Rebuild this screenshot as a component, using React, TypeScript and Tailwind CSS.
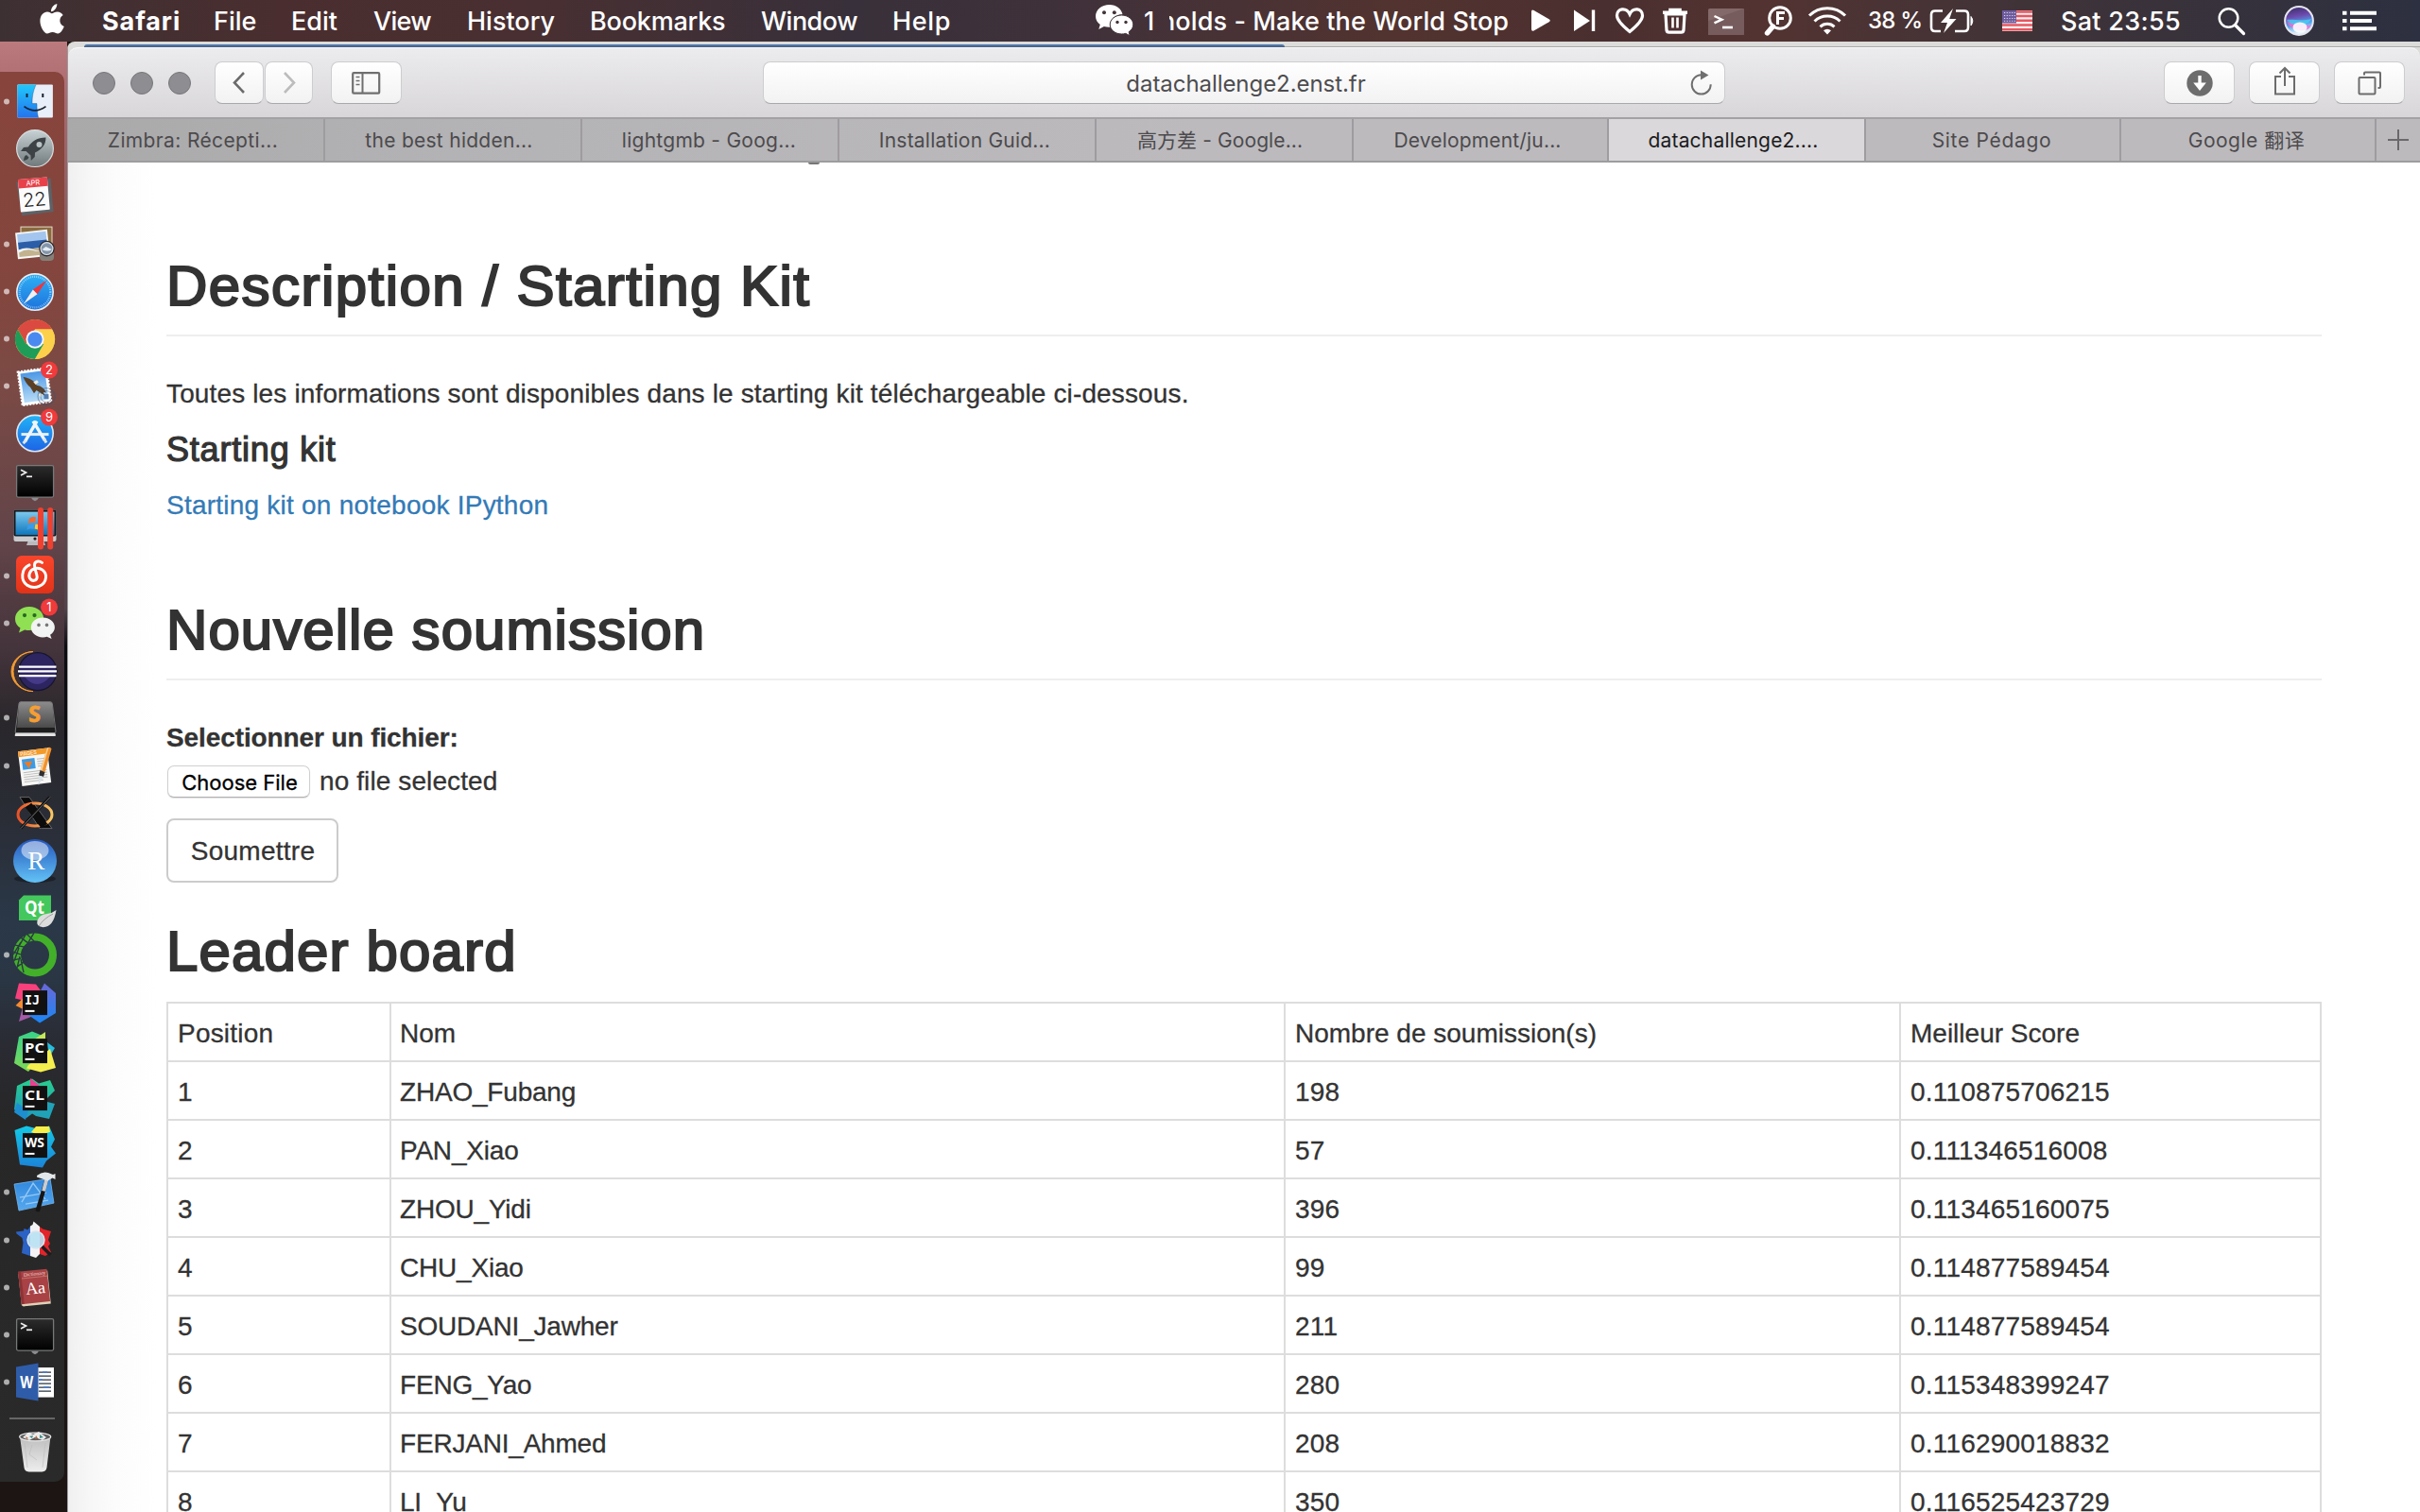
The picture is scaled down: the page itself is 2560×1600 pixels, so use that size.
import React from 'react';

const menus = [
  { label: 'Safari', cls: 'w-[118px] font-bold tracking-[0.9px]' },
  { label: 'File', cls: 'w-[82px]' },
  { label: 'Edit', cls: 'w-[87px]' },
  { label: 'View', cls: 'w-[99px] tracking-[-0.7px]' },
  { label: 'History', cls: 'w-[130px]' },
  { label: 'Bookmarks', cls: 'w-[181px] tracking-[-0.2px]' },
  { label: 'Window', cls: 'w-[139px] tracking-[-0.5px]' },
  { label: 'Help', cls: 'w-[215px] tracking-[0.7px]' },
];

function StatusIcons() {
  return (
    <svg className="h-[44px] w-[350px] shrink-0" viewBox="1612 0 350 44" fill="none">
      <path d="M1620 12.500q0-3 2.600-1.600l16 9.300q2.400 1.500 0 3l-16 9.300q-2.600 1.200-2.600-1.700Z" fill="#fff" />
      <path d="M1665 10.500l17 11.500-17 11V10.500Z" fill="#fff" />
      <path d="M1685.500 10.500V33" stroke="#fff" strokeWidth="3.400" />
      <path d="M1724 33.500C1716 27 1710.500 21.500 1710.500 16.500c0-8 10-9 13.500-1.500 3.500-7.500 13.500-6.500 13.500 1.500 0 5-5.500 10.500-13.500 17Z" stroke="#fff" strokeWidth="3.200" />
      <path d="M1759 13.200h26M1767 12.500V10.500h10v2" stroke="#fff" strokeWidth="3.600" />
      <path d="M1762 15l1 17q.3 2.200 2.500 2.200h13q2.200 0 2.500-2.200l1-17Z" stroke="#fff" strokeWidth="3.200" />
      <path d="M1769.500 18.500v11M1774.500 18.500v11" stroke="#fff" strokeWidth="2.600" />
      <rect x="1807" y="9" width="38" height="28" rx="1.500" fill="#84696a" />
      <path d="M1807 37V22l38-13v26.500q0 1.500-1.500 1.500Z" fill="#775c5e" />
      <path d="M1813.500 17l8 3.700-8 3.700" stroke="#fff" strokeWidth="2.400" />
      <path d="M1822 29h11" stroke="#fff" strokeWidth="2.600" />
      <circle cx="1883" cy="19" r="11.300" stroke="#fff" strokeWidth="3" />
      <path d="M1875.500 28l-6 7" stroke="#fff" strokeWidth="5.400" strokeLinecap="round" />
      <path d="M1880.500 26V13.500h7.500M1880.500 19.500h6.500" stroke="#fff" strokeWidth="3" />
      <path d="M1914 16.500a27 27 0 0 1 38 0M1919.500 22.500a19.500 19.500 0 0 1 27 0M1925.500 28.300a11 11 0 0 1 15 0" stroke="#fff" strokeWidth="3" />
      <path d="M1929 32.200a6 6 0 0 1 8 0l-4 4.200Z" fill="#fff" />
    </svg>
  );
}

function MenuBar() {
  return (
    <div className="flex h-[44px] w-[2560px] shrink-0 items-center whitespace-nowrap bg-[linear-gradient(90deg,#3d3033_0px,#4a2e2f_300px,#492f31_550px,#38303a_900px,#40313a_1150px,#52332f_1480px,#4a2f30_1700px,#533331_1860px,#3f3338_2150px,#2d3040_2560px)] font-['Inter','Noto_Sans',sans-serif] text-[27px] font-medium leading-[46px] text-white">
      <svg className="ml-[42px] mr-[40px] h-[44px] w-[26px] shrink-0" viewBox="0 0 26 44">
        <path d="M18.300 4c.3 3.800-2.700 8-6.200 8.300C11.600 8.700 14.900 4.600 18.300 4ZM12.800 14.300c1.500 0 3.200-1.700 6-1.700 2.400.1 4.500 1.300 5.900 3.300-5 3-4.100 10 1.100 12.100-1.200 3.300-3.800 7.400-6.400 7.500-2.300.1-3.100-1.400-5.800-1.400s-3.600 1.400-5.800 1.400C5.100 35.600.4 29 .4 22.300c0-6.500 4-9.600 7.600-9.700 2.300 0 3.900 1.700 4.800 1.700Z" fill="#fff" />
      </svg>
      {menus.map((m) => (
        <span key={m.label} className={'shrink-0 pt-[2px] ' + m.cls}>{m.label}</span>
      ))}
      <svg className="h-[44px] w-[42px] shrink-0" viewBox="1159 0 42 44">
        <path d="M1173.500 5c-8 0-14.500 5.400-14.500 12.200 0 3.600 1.900 6.600 4.800 8.800l-1.500 5 5.600-3c1.800.5 3.700.8 5.600.8h1c-2-7 4-13.500 13-13.500C1186.500 9.500 1181 5 1173.500 5Z" fill="#fff" />
        <path d="M1186.500 16c-6.800 0-12.300 4.500-12.300 10s5.500 10 12.300 10c1.500 0 3-.2 4.300-.6l4.400 2.400-1.100-4c2.800-1.900 4.700-4.700 4.700-7.800 0-5.500-5.500-10-12.300-10Z" fill="#fff" stroke="#43343a" strokeWidth="1" />
        <circle cx="1168" cy="13.300" r="2" fill="#43343a" /><circle cx="1178.800" cy="13.300" r="2" fill="#43343a" />
        <circle cx="1182" cy="23.500" r="1.700" fill="#43343a" /><circle cx="1191" cy="23.500" r="1.700" fill="#43343a" />
      </svg>
      <span className="ml-[9px] w-[27px] shrink-0 pt-[2px]">1</span>
      <span className="flex w-[375px] shrink-0 justify-start overflow-hidden pt-[2px]">
        <span className="-ml-[10px] tracking-[0.1px]">nolds - Make the World Stop</span>
      </span>
      <StatusIcons />
      <span className="ml-[14px] w-[65px] shrink-0 text-[24px] tracking-[-0.8px]">38 %</span>
      <svg className="h-[44px] w-[109px] shrink-0" viewBox="2041 0 109 44" fill="none">
        <path d="M2055 11.500h-8q-4 0-4 4v13.500q0 4 4 4h6M2069 11.500h9q4 0 4 4v13.500q0 4-4 4h-10" stroke="#fff" strokeWidth="2.600" />
        <path d="M2085 17.500q3.600 4.500 0 9.500Z" fill="#fff" stroke="#fff" />
        <path d="M2066 9l-13 15h7l-4 11 13.500-15h-7.300Z" fill="#fff" />
        <rect x="2118" y="11" width="32" height="22" fill="#f4f0f2" />
        <path d="M2118 12.500h32M2118 17h32M2118 21.700h32M2118 26.400h32M2118 31.300h32" stroke="#e9555f" strokeWidth="2.500" />
        <rect x="2118" y="11" width="15" height="13.500" fill="#6d5b9d" />
        <path d="M2120 13.500h12M2120 16.500h12M2120 19.500h12M2120 22.300h12" stroke="#d9d4ea" strokeWidth="1" strokeDasharray="1.200 1.500" />
      </svg>
      <span className="ml-[30px] w-[163px] shrink-0 pt-[2px] tracking-[0.3px]">Sat 23:55</span>
      <svg className="h-[44px] w-[180px] shrink-0" viewBox="2343 0 180 44" fill="none">
        <defs>
          <linearGradient id="siri" x1="0" y1="0" x2="0.2" y2="1">
            <stop offset="0" stopColor="#33285c" /><stop offset="0.4" stopColor="#6d4aae" /><stop offset="0.7" stopColor="#4fa6ee" /><stop offset="1" stopColor="#e7f6ff" />
          </linearGradient>
        </defs>
        <circle cx="2357.500" cy="19" r="9.800" stroke="#fff" strokeWidth="2.500" />
        <path d="M2364.500 26.500l9 9" stroke="#fff" strokeWidth="3.200" strokeLinecap="round" />
        <circle cx="2432" cy="22" r="14.900" fill="url(#siri)" stroke="#e6e6ee" strokeWidth="2" />
        <path d="M2419 21c9-1 14 2 26-1-4 7-8 4-13 9-5-1-9-3-13-8Z" fill="#48d7f5" opacity=".7" />
        <path d="M2419 22c7 6 11 2 16 3s6 3 10 1c-2 6-8 7-13 6s-11-3-13-10Z" fill="#f06bd0" opacity=".8" />
        <ellipse cx="2433" cy="29" rx="7.500" ry="5.500" fill="#fff" opacity=".85" />
        <path d="M2478 13.700h4.500M2478 22h4.500M2478 30.300h4.500M2486 13.700h28M2486 22h23M2486 30.300h28" stroke="#fff" strokeWidth="4" />
      </svg>
    </div>
  );
}

type IconDef = { name: string; dot?: boolean; badge?: string; art: React.ReactNode };

function Badge({ n }: { n: string }) {
  return (
    <g>
      <circle cx="52" cy="8.500" r="9" fill="#f03a3c" />
      <text x="52" y="13.100" textAnchor="middle" fontSize="13" fontFamily="Inter" fill="#fff">{n}</text>
    </g>
  );
}

function JetTile({ t }: { t: string }) {
  return (
    <g>
      <rect x="24" y="12" width="26" height="26" fill="#111" />
      <text x="26" y="26.500" fontSize="14.500" fontWeight="700" fontFamily={t === 'IJ' ? 'DejaVu Sans Mono' : 'Open Sans'} textLength={t === 'IJ' ? 16 : 21} lengthAdjust="spacingAndGlyphs" fill="#fff">{t}</text>
      <path d="M26.500 33.800h10" stroke="#fff" strokeWidth="2" />
    </g>
  );
}

function TerminalArt() {
  return (
    <g transform="translate(0 .7)">
      <path d="M33 42q4 7 8 0Z" fill="#8d8d90" />
      <rect x="17.600" y="7.800" width="39" height="33.500" rx="1.500" fill="url(#term)" stroke="#77787a" strokeWidth="1.300" />
      <path d="M22 12.500l5.500 2.800-5.500 2.800" stroke="#eee" strokeWidth="1.700" fill="none" />
      <path d="M28 19.500h6" stroke="#eee" strokeWidth="1.700" />
    </g>
  );
}

const dock: IconDef[] = [
  { name: 'finder', dot: true, art: (
    <g>
      <rect x="18.300" y="7.500" width="37.600" height="35" rx="1" fill="#e8eff8" />
      <path d="M18.300 8.500q0-1 1-1H38c-3 7-4 12-4 20h5c0 6 .4 10 1.500 15H19.300q-1 0-1-1Z" fill="url(#finderBlue)" />
      <path d="M38 7.500c-3 7-4 12-4 20h5c0 6 .4 10 1.500 15" stroke="#174a8a" strokeOpacity=".4" fill="none" />
      <path d="M28.500 17v4M45.300 17v4" stroke="#17202c" strokeWidth="2" />
      <path d="M25.500 30.500q11.500 8.500 23 0" stroke="#17202c" strokeWidth="1.700" fill="none" />
    </g>) },
  { name: 'launchpad', art: (
    <g>
      <circle cx="37" cy="25" r="19.400" fill="url(#silver)" stroke="#d7dee0" strokeWidth="1.200" />
      <path d="M48.500 13.500c-9 0-15 4-18.500 10l-5 .5-3 4 5.500-.2 5 4.700.3 5.500 4-4 .2-4.500c7-3.500 11.500-8 11.500-16Z" fill="#3c4245" />
      <circle cx="41.500" cy="21" r="3" fill="#b9c2c4" />
      <path d="M28 32c-2 .3-2.700 3-3 6 3-.5 5-1.500 5.500-3.500Z" fill="#3c4245" />
    </g>) },
  { name: 'calendar', art: (
    <g transform="rotate(-5 37 25)">
      <path d="M18.500 9l3 36 33.500-1.500V8Z" fill="#5d6266" />
      <rect x="20.500" y="6.500" width="31" height="34.500" rx=".8" fill="#fbfbfb" />
      <rect x="20.500" y="6.500" width="31" height="9.500" fill="#e8414a" />
      <text x="36" y="13.800" textAnchor="middle" fontSize="7.500" fontFamily="Inter" fill="#fff">APR</text>
      <text x="36" y="36" textAnchor="middle" fontSize="20" fontFamily="Inter" fontWeight="300" fill="#222">22</text>
    </g>) },
  { name: 'preview', dot: true, art: (
    <g>
      <rect x="22" y="7" width="33" height="30" fill="#8a6b3e" stroke="#e8e0cc" />
      <g transform="rotate(-6 34 26)">
        <rect x="17.500" y="11.500" width="34" height="28" fill="#f7f7f7" />
        <rect x="19.300" y="13.300" width="30.500" height="10" fill="#a4c6ee" />
        <rect x="19.300" y="22" width="30.500" height="8" fill="#2c5ea8" />
        <path d="M19.300 30h30.500v7.500H19.300Z" fill="#c3b28e" />
        <path d="M19.300 30q8-3 15 1t15-1v2q-8 3-15 0t-15 1Z" fill="#eef4fa" />
      </g>
      <rect x="42" y="33" width="15" height="10" rx="4" fill="#857f79" />
      <circle cx="49.500" cy="30" r="7.600" fill="#8295ab" stroke="#2b2b2d" strokeWidth="1.400" />
      <circle cx="49.500" cy="30" r="6.400" fill="none" stroke="#dadde0" strokeWidth="1.200" />
      <path d="M44.500 31l4-3 6.500 3q-5 3-10.500 0Z" fill="#e7edf2" />
    </g>) },
  { name: 'safari', dot: true, art: (
    <g transform="translate(0 1)">
      <circle cx="37" cy="25" r="19.200" fill="url(#safariBlue)" stroke="#e9edf0" strokeWidth="1.600" />
      <circle cx="37" cy="25" r="16.300" fill="none" stroke="#c8ecff" strokeWidth="2.200" strokeDasharray=".7 1.400" opacity=".8" />
      <path d="M49.500 12.500L34.800 22.300l4.700 4.800Z" fill="#f0343a" />
      <path d="M25 37.500l9.800-15.200 4.700 4.800Z" fill="#f2efee" />
    </g>) },
  { name: 'chrome', dot: true, art: (
    <g transform="translate(0 1)">
      <circle cx="37" cy="25" r="21" fill="#f9cf48" />
      <path d="M18.800 14.500A21 21 0 0 1 55.200 14.500H37L27.900 30.200Z" fill="#db4a40" />
      <path d="M18.800 14.500A21 21 0 0 0 37 46l9.100-15.700L37 25 27.900 30.300Z" fill="#1e9d59" />
      <path d="M55.200 14.500H37l9.100 15.800L37 46A21 21 0 0 0 55.200 14.500Z" fill="#fcd04a" />
      <circle cx="37" cy="25" r="9.600" fill="#f6f6f6" /><circle cx="37" cy="25" r="7.700" fill="#4a8af0" />
    </g>) },
  { name: 'mail', dot: true, badge: '2', art: (
    <g>
      <g transform="rotate(-8 37 26)">
        <rect x="21" y="8" width="31" height="36" fill="#fff" stroke="#fff" strokeWidth="2" strokeDasharray="2 1.400" />
        <rect x="23.500" y="10.500" width="26" height="31" fill="url(#mailBlue)" />
        <path d="M26 14q2 8 6 12l3 7 3-3 8 7-1-4 3 1q-2-7-9-9l-2-4q-3-4-11-7Z" fill="#5b4025" />
        <path d="M36 21l4-1.500 1.500 2.500-3.500 2ZM39 34l2 4 3-3Z" fill="#f1ebdd" />
      </g>
      <circle cx="49" cy="36.500" r="9" fill="none" stroke="#3b5170" strokeOpacity=".45" strokeWidth="1.200" />
      <circle cx="49" cy="36.500" r="6" fill="none" stroke="#3b5170" strokeOpacity=".45" strokeWidth="1" />
      <rect x="46.500" y="34" width="5" height="5" fill="#31588f" opacity=".7" />
    </g>) },
  { name: 'app store', badge: '9', art: (
    <g>
      <circle cx="37" cy="25.500" r="19.200" fill="url(#storeBlue)" stroke="#dfe7ee" strokeWidth="1.600" />
      <path d="M22.500 26.500h29" stroke="#e6eef5" strokeWidth="3" />
      <path d="M39 12.500L26.500 34M35 12.500L47.500 33" stroke="#f0f5f9" strokeWidth="3.400" />
      <path d="M27.500 33l-3 3M46.500 31l2.500 4.500" stroke="#e2e2e2" strokeWidth="3" />
    </g>) },
  { name: 'terminal', art: <TerminalArt /> },
  { name: 'parallels', art: (
    <g transform="translate(0 -4)">
      <path d="M31 39h14l3 8H28Z" fill="#b9bbbf" />
      <rect x="14.500" y="9.500" width="45" height="33.500" rx="2" fill="#c9cbce" />
      <rect x="14.500" y="9.500" width="45" height="28" rx="2" fill="#17191c" />
      <rect x="16.500" y="11.500" width="41" height="24.500" fill="url(#winBlue)" />
      <path d="M31 18.500q4-3 7-1l-1 6q-4-2-7 1Z" fill="#f16a35" /><path d="M29.500 25.500q4-3 7-1l-1 5.500q-4-2-7 1Z" fill="#3b9be8" /><path d="M37.500 24.500l3 .5v5.500l-4-1Z" fill="#f9c73b" />
      <circle cx="37" cy="40" r="1.600" fill="#222" />
      <rect x="40" y="7" width="6" height="44.500" rx="3" fill="#f0402f" />
      <rect x="50.200" y="7" width="6" height="44.500" rx="3" fill="#f0402f" />
    </g>) },
  { name: 'music', dot: true, art: (
    <g transform="translate(0 -.7)">
      <rect x="17" y="4.500" width="40" height="40" rx="6" fill="url(#musicRed)" />
      <path d="M31 14.500c-9 4-9.500 16.500-2 21.500 8 5 18.500.5 19.500-8 .8-7-6-12-12.500-9.500-5 2-6.500 7.800-3.800 11 2.500 2.700 7 1.500 7-2.500 0-3-2.700-8-2.700-12.500 0-4 4.500-5 8-2.500" stroke="#fff" strokeWidth="3" fill="none" strokeLinecap="round" />
    </g>) },
  { name: 'wechat', dot: true, badge: '1', art: (
    <g>
      <path d="M31 8c-8.500 0-15 5.700-15 12.800 0 4 2.100 7.400 5.500 9.700L20 35.500l6.200-3.200c1.600.4 3.200.6 4.800.6 8.500 0 15.200-5.500 15.200-12.200C46.200 13.600 39.500 8 31 8Z" fill="#90e053" />
      <circle cx="26" cy="17" r="2.100" fill="#266a22" /><circle cx="36.500" cy="17" r="2.100" fill="#266a22" />
      <path d="M45.300 19.500c-7 0-12.500 4.700-12.500 10.400s5.500 10.400 12.500 10.400c1.500 0 3-.2 4.300-.6l5 2.300-1.500-4.300c3-1.900 4.800-4.700 4.800-7.800 0-5.700-5.600-10.400-12.600-10.400Z" fill="#f2f3f3" />
      <circle cx="41" cy="27.300" r="1.800" fill="#787878" /><circle cx="49.500" cy="27.300" r="1.800" fill="#787878" />
    </g>) },
  { name: 'eclipse', art: (
    <g transform="translate(0 1)">
      <path d="M35 4.500a21 21 0 0 0 0 42a23 21 0 0 1 0-42Z" fill="#f59c33" stroke="#f59c33" strokeWidth="1" />
      <circle cx="39.800" cy="25.500" r="20" fill="#2c2560" stroke="#18152e" strokeWidth="1.200" />
      <path d="M26 31q13 16 27 0Z" fill="#443a88" />
      <path d="M20 20.500h39.500M19 25.300h41M20 30h39.500" stroke="#fff" strokeWidth="2.200" />
    </g>) },
  { name: 'sublime', dot: true, art: (
    <g transform="translate(0 1)">
      <path d="M18 36h38.500l2.500 7q0 1-1.200 1H16.500q-1 0-.8-1Z" fill="#e4e4e4" />
      <path d="M22 7.500h31q2 0 2.300 2L59 39q0 1.500-1.500 1.500h-40Q16 40.500 16.200 39L20 9.500q.3-2 2-2Z" fill="#1d1d1d" stroke="#9a9a9a" strokeWidth=".7" />
      <path d="M22 8h31q2 0 2.300 2L58 35H18L20 10q.3-2 2-2Z" fill="url(#subGrey)" />
      <text x="36.500" y="29" textAnchor="middle" fontSize="23" fontWeight="700" fontFamily="Open Sans" stroke="#f69e33" strokeWidth=".8" fill="#f69e33">S</text>
    </g>) },
  { name: 'pages', dot: true, art: (
    <g>
      <g transform="rotate(-7 37 26)">
        <rect x="21" y="8" width="31" height="37" fill="#f6f6f4" />
        <rect x="21" y="8" width="31" height="6" fill="#f39a2b" />
        <text x="23" y="13.200" fontSize="5.500" fontFamily="Inter" fill="#fff">PAGES</text>
        <rect x="24" y="17" width="13.500" height="11" fill="#3b9be6" />
        <path d="M26 20h9l-4.500 7Z" fill="#ea7b27" />
        <path d="M40 18.500h9M40 21h9M40 23.500h9M40 26h9M24 31h25M24 33.500h25M24 36h25M24 38.500h25M24 41h20" stroke="#bbb" strokeWidth="1" />
      </g>
      <path d="M50 6.500q3-2 4.500.8L47.500 32l-5-2Z" fill="#f0912c" /><path d="M50 6.500l1.500-.6-7 24.500-2-.6Z" fill="#fbcf8e" />
      <path d="M42.500 30l5 2-1.500 5-5-1.500Z" fill="#2e2e2e" /><path d="M41 35.500l4.500 1.500-4.700 9Z" fill="#d9e2e8" />
    </g>) },
  { name: 'xquartz', art: (
    <g>
      <path d="M21 8.500h10l24 33H42Z" fill="#0b0b0b" stroke="#777" strokeWidth=".8" />
      <ellipse cx="37" cy="27" rx="18" ry="12" fill="none" stroke="url(#xRing)" strokeWidth="3" />
      <path d="M30 17l17 22" stroke="#0c0c0c" strokeWidth="8" />
      <path d="M52.500 8.500L22 41.500" stroke="#111" strokeWidth="3" /><path d="M53 8.500L22 41.500" stroke="#888" strokeWidth=".8" />
    </g>) },
  { name: 'rstudio', art: (
    <g transform="translate(0 .8)">
      <ellipse cx="37" cy="44" rx="22" ry="4" fill="#14171c" opacity=".6" />
      <circle cx="37" cy="25" r="23" fill="url(#rBlue)" />
      <ellipse cx="37" cy="14" rx="14.500" ry="10" fill="#fff" opacity=".5" />
      <text x="38.300" y="34" textAnchor="middle" fontSize="27" fontFamily="Liberation Serif" fill="#fff">R</text>
    </g>) },
  { name: 'qt', art: (
    <g transform="translate(0 3)">
      <path d="M25 9.500h29V36H20V14.500Z" fill="#44c75c" />
      <text x="36.500" y="28.500" textAnchor="middle" fontSize="19" fontWeight="700" fontFamily="Open Sans" textLength="21" lengthAdjust="spacingAndGlyphs" fill="#fff">Qt</text>
      <path d="M59.500 25q-3 19-15 18-6.500-1-5-7 2-6 10-7 6-.7 10-4Z" fill="#dcdcdc" /><path d="M41 42q5-8 15-13" stroke="#8d8d8d" strokeWidth=".8" fill="none" />
    </g>) },
  { name: 'anaconda', dot: true, art: (
    <g>
      <circle cx="37" cy="25.500" r="19" fill="none" stroke="#43b02a" strokeWidth="8" />
      <path d="M36 2l-6 10M28 3l8 8M22 7l8 6M27 4l-8 14M16 15l10 2M22 12l-8 13M14 22l8 3M20 18l-5 14M14 31l8-2M21 27l-3 12M18 38l7-5M22 30l3 14" stroke="#2a3846" strokeWidth="1.400" />
    </g>) },
  { name: 'intellij', art: (
    <g>
      <path d="M20 4.500l18 1 6 8-20 9-8-2Z" fill="#f8407c" /><path d="M16.500 28l8-8v12Z" fill="#f58b32" />
      <path d="M24 30l-4 15 18-7Z" fill="#a45ba8" /><path d="M47 4.500L59 15v21L42 46.500 30 38l12-24Z" fill="url(#ijBlue)" /><JetTile t="IJ" />
    </g>) },
  { name: 'pycharm', art: (
    <g transform="translate(0 1)">
      <path d="M20 10L34 4.500 45 9v20L30 47l-15-9Z" fill="url(#pcGreen)" /><path d="M48 5v12l-12-4Z" fill="#c3e85b" /><path d="M50 16l8 6-6 10Z" fill="#27bde0" />
      <path d="M30 40l23-17 6 20-16 4.500-15-4Z" fill="#f6f04f" /><JetTile t="PC" />
    </g>) },
  { name: 'clion', art: (
    <g transform="translate(0 1)">
      <path d="M18 12L34 4.500l7 5L53 6l5 11-8 8v9l-14 6-8 6-13-9Z" fill="url(#clGreen)" /><path d="M32 4l10 8-10 2Z" fill="#ee3e90" /><path d="M18 30l12 8-3 10-12-8Z" fill="#1d8fd0" />
      <path d="M38 38l12-9 8 2-6 16-14-3-6-4Z" fill="#20a3b8" /><JetTile t="CL" />
    </g>) },
  { name: 'webstorm', art: (
    <g transform="translate(0 1)">
      <path d="M15.500 9L28 4.500l12 3 12-3 6 14-4 8 5 7-10 8-4 7-24-3Z" fill="url(#wsBlue)" /><path d="M38 5h14l1 6-12 3-8-3Z" fill="#f7ef4a" /><JetTile t="WS" />
    </g>) },
  { name: 'xcode', dot: true, art: (
    <g>
      <path d="M15 17l38-6 4 26-37 8Z" fill="url(#xcBlue)" stroke="#75b8ee" strokeWidth=".8" />
      <path d="M23 36l12-20 13 17M21 31l28-5M27 38l24-4" stroke="#a9d5f8" strokeWidth="1.400" fill="none" opacity=".8" />
      <path d="M47.500 11l4 .6L42 46q-3 1-4.500-1Z" fill="#161616" />
      <path d="M47.500 11l4 .6-3.500 13-3.800-.6Z" fill="#c9ccd0" />
      <path d="M39 8q6-5 12-3l5 2 2.500-1v6l-3-1.500-5 3L39 9.500Z" fill="#e4e7ea" />
    </g>) },
  { name: 'france', dot: true, art: (
    <g>
      <path d="M17 16.500l8-1 .5-2.500 4 1.500 2.500-4v31.500l-9-3 1.500-11-1-5-6-4.500Z" fill="#2b62c4" />
      <path d="M32 10.500l2.500-1.500 1-3.500 6.500 5.500v29l-4 4-6-2Z" fill="#f3f3f5" />
      <path d="M42 11l3 2.500 9 2.500-3 9 2 4-2 3 3 6-6 4-6-2Z" fill="#e3242b" />
      <circle cx="38" cy="25" r="9" fill="#b8e2f4" fillOpacity=".9" stroke="#d8e4ea" strokeWidth="1.500" /><path d="M44.500 32l9 9" stroke="#1d1d1f" strokeWidth="3.600" />
    </g>) },
  { name: 'dictionary', dot: true, art: (
    <g transform="rotate(-6 37 26)">
      <path d="M21 9h31v35H24q-3 0-3-3Z" fill="#e0d2b8" /><path d="M21 7h30.500v34.500H21Z" fill="#a84245" /><path d="M21 7h3v34.500h-3Z" fill="#8d3336" />
      <path d="M24 14.500h27.500" stroke="#c97c77" strokeWidth=".8" />
      <text x="38" y="12.600" textAnchor="middle" fontSize="5.500" fontFamily="Liberation Serif" fill="#f3dcd6">Dictionary</text>
      <text x="37.500" y="32" textAnchor="middle" fontSize="18" fontFamily="Liberation Serif" fill="#fff">Aa</text>
    </g>) },
  { name: 'terminal window', dot: true, art: <TerminalArt /> },
  { name: 'word', dot: true, art: (
    <g>
      <rect x="38" y="10" width="19" height="31.500" fill="#fff" />
      <path d="M41 15h13M41 19h13M41 23h13M41 27h13M41 31h13M41 35h13" stroke="#2b3442" strokeWidth="1.300" /><path d="M45 15h5M41 23h4M46 31h6" stroke="#4a7fd0" strokeWidth="1.500" />
      <path d="M17 9.500L40.500 5.500v40L17 41.500Z" fill="#2f5ca8" />
      <text x="28.300" y="31.500" textAnchor="middle" fontSize="17" fontWeight="700" fontFamily="Open Sans" textLength="14" lengthAdjust="spacingAndGlyphs" fill="#fff">W</text>
    </g>) },
];

function Dock() {
  return (
    <aside className="flex h-[1556px] w-[71px] shrink-0 flex-col bg-[linear-gradient(180deg,#bb7a7d_0px,#a96a6e_60px,#7a4d4c_300px,#52424a_600px,#0c0c10_640px,#16181d_1100px,#1b1514_1300px,#1c1513_1556px)]">
      <div className="mt-[32px] h-[1492px] w-[68px] overflow-hidden rounded-r-[10px] bg-[linear-gradient(180deg,#87443c_0px,#83463e_230px,#7b4a45_330px,#614449_500px,#44343b_610px,#29272b_690px,#2a2d36_790px,#2a3848_900px,#2a3644_960px,#2a2b33_1030px,#272727_1110px,#2a2a2a_1492px)] pt-[6px]">
        {dock.map((d) => (
          <svg key={d.name} className="block h-[50.2px] w-[68px] overflow-visible" viewBox="0 0 68 50">
            {d.dot && <circle cx="7" cy="25.300" r="3" fill="#fff" opacity=".62" />}
            {d.art}
            {d.badge && <Badge n={d.badge} />}
          </svg>
        ))}
        <div className="ml-[10px] mt-[13px] h-[2px] w-[48px] bg-[#666]" />
        <svg className="mt-[11px] block h-[50px] w-[68px]" viewBox="0 0 68 50">
          <path d="M21 7h32.500l-4 33q-.6 4-5 4.500h-14q-4.500-.5-5-4.500Z" fill="url(#trash)" />
          <ellipse cx="37.200" cy="7.500" rx="16.500" ry="4.300" fill="#5c5c5c" stroke="#e4e4e4" strokeWidth="1.300" />
          <path d="M24 8l6-5 5 2 6-3 8 6-4 3-8-3-6 3Z" fill="#ececec" /><path d="M31 7l4-1-1 3ZM42 5l4 3-4 1Z" fill="#3f8f8a" /><path d="M27 7l3 2-2 1ZM38 6l2 3-3 1Z" fill="#b5643f" />
          <path d="M26 14l3 26M48 14l-3 26M34 16l-3 10 8 6" stroke="#bbb" strokeWidth="1" fill="none" opacity=".6" />
        </svg>
      </div>
    </aside>
  );
}

function Gradients() {
  const g: [string, string, string][] = [
    ['finderBlue', '#21c8fb', '#2473ee'], ['silver', '#c7d2d5', '#70787a'], ['safariBlue', '#2fb0f5', '#1d72dc'], ['mailBlue', '#4d98e6', '#b7dcf7'],
    ['storeBlue', '#22b3f6', '#1d63e6'], ['winBlue', '#7cc8ee', '#0d76bc'], ['musicRed', '#f9452b', '#e23318'], ['subGrey', '#8b8b8b', '#4a4a4a'],
    ['rBlue', '#2455bb', '#63c3f6'], ['ijBlue', '#6b67d6', '#1b86f5'], ['pcGreen', '#38d28a', '#7fd957'], ['clGreen', '#29cf8c', '#2099c0'],
    ['wsBlue', '#14c8e6', '#1c83d8'], ['xcBlue', '#2e86dc', '#56a8ee'], ['trash', '#bdbdbd', '#eeeeee'], ['term', '#2c2c2c', '#000000'],
  ];
  return (
    <svg className="absolute h-0 w-0">
      <defs>
        {g.map(([id, a, b]) => (
          <linearGradient key={id} id={id} x1="0" y1="0" x2="0" y2="1"><stop offset="0" stopColor={a} /><stop offset="1" stopColor={b} /></linearGradient>
        ))}
        <linearGradient id="xRing"><stop offset="0" stopColor="#ea5227" /><stop offset="1" stopColor="#f8c765" /></linearGradient>
      </defs>
    </svg>
  );
}

const btn = 'flex h-[45px] shrink-0 items-center justify-center rounded-[8px] border border-[#cdcccf] border-b-[#a9a8ab] bg-linear-to-b from-white to-[#f3f2f3]';

function Toolbar() {
  return (
    <div className="flex h-[74px] items-start rounded-t-[10px] border-t border-[#fafafa] bg-linear-to-b from-[#ecebed] to-[#d8d6d9] pl-[26px] pt-[14px]">
      <div className="mt-[11px] flex gap-[16px]">
        {[0, 1, 2].map((i) => (
          <div key={i} className="h-[24px] w-[24px] rounded-full border border-[#77767a] bg-[#8e8d91]" />
        ))}
      </div>
      <div className={btn + ' ml-[25px] w-[52px]'}>
        <svg className="h-[26px] w-[16px]" viewBox="0 0 16 26" fill="none"><path d="M13 2L3 12.500 13 23" stroke="#6b6b6b" strokeWidth="2.600" /></svg>
      </div>
      <div className={btn + ' ml-[1px] w-[51px]'}>
        <svg className="h-[26px] w-[16px]" viewBox="0 0 16 26" fill="none"><path d="M3 2l10 10.500L3 23" stroke="#bcbcbc" strokeWidth="2.600" /></svg>
      </div>
      <div className={btn + ' ml-[19px] w-[75px]'}>
        <svg className="h-[24px] w-[31px]" viewBox="0 0 31 24" fill="none" stroke="#6f6f6f"><rect x="1.200" y="1.200" width="28" height="21.500" rx="1" strokeWidth="2.200" /><path d="M11.500 1v22" strokeWidth="2" /><path d="M4.500 5.500h4M4.500 9.500h4M4.500 13.500h4" strokeWidth="1.600" /></svg>
      </div>
      <div className={btn + ' ml-[382px] w-[1018px]'}>
        <div className="w-[40px] shrink-0" />
        <div className="flex-1 text-center font-['Inter',sans-serif] text-[24px] leading-[45px] tracking-[-0.06px] text-[#4d4d4f]">
          <span className="inline-block pt-[2px]">datachallenge2.enst.fr</span>
        </div>
        <svg className="mr-[12px] h-[28px] w-[24px] shrink-0" viewBox="0 0 24 28" fill="none"><path d="M11.500 5.200A10 10.200 0 1 0 21.700 15.300" stroke="#6f6f6f" strokeWidth="2" /><path d="M11 .5l8.500 5L11 10.500Z" fill="#6f6f6f" /></svg>
      </div>
      <div className={btn + ' ml-[464px] w-[75px]'}>
        <svg className="h-[28px] w-[28px]" viewBox="0 0 28 28"><circle cx="14" cy="14" r="13.700" fill="#6d6d6e" /><path d="M14 6v10" stroke="#fff" strokeWidth="3.400" /><path d="M7.200 13.500h13.600L14 22Z" fill="#fff" /></svg>
      </div>
      <div className={btn + ' ml-[15px] w-[75px]'}>
        <svg className="mb-[4px] h-[31px] w-[24px]" viewBox="0 0 24 31" fill="none" stroke="#6c6c6c" strokeWidth="2"><path d="M8 11H2v18.500h20V11h-6M12 21V2M6.500 7.500L12 2l5.500 5.500" /></svg>
      </div>
      <div className={btn + ' ml-[15px] w-[75px]'}>
        <svg className="h-[26px] w-[26px]" viewBox="0 0 26 26" fill="none" stroke="#6c6c6c" strokeWidth="2"><rect x="1.500" y="7" width="17" height="17.500" rx="1" /><path d="M7 4.500V2.500q0-1 1-1h15q1 0 1 1V17q0 1-1 1h-1.500" /></svg>
      </div>
    </div>
  );
}

const tabs = [
  { t: 'Zimbra: Récepti...', cls: 'w-[272px] pr-[6px] tracking-[0.36px]' },
  { t: 'the best hidden...', cls: 'w-[272px] pr-[8px] tracking-[0.27px]' },
  { t: 'lightgmb - Goog...', cls: 'w-[272px] pr-[2px] tracking-[0.26px]' },
  { t: 'Installation Guid...', cls: 'w-[272px] pr-[5px] tracking-[0.22px]' },
  { t: '高方差 - Google...', cls: 'w-[272px] pr-[9px] tracking-[0.1px]' },
  { t: 'Development/ju...', cls: 'w-[270px] pr-[6px] tracking-[0.17px]' },
  { t: 'datachallenge2....', cls: 'w-[272px] pr-[7px] tracking-[0.2px]', active: true },
  { t: 'Site Pédago', cls: 'w-[270px] pr-[2px] tracking-[0.7px]' },
  { t: 'Google 翻译', cls: 'w-[270px] pr-[3px] tracking-[0.5px]' },
];

function TabBar() {
  return (
    <div className="flex h-[48px] border-y-2 border-t-[#a3a1a4] border-b-[#9d9c9e] bg-[linear-gradient(90deg,#aaa9aa_0px,#b3b2b4_400px,#bcbabd_1200px)] font-['Inter','Noto_Sans_CJK_SC',sans-serif] text-[21px] leading-[46px] text-[#4c4a4d]">
      {tabs.map((tab) => (
        <div key={tab.t} className={'h-[44px] shrink-0 whitespace-nowrap border-r-2 border-[#9e9ca0] text-center ' + tab.cls + (tab.active ? ' bg-[#dad8db] text-[#1c1b1d]' : '')}>
          {tab.t}
        </div>
      ))}
      <div className="flex flex-1 items-center justify-center">
        <svg className="h-[22px] w-[22px]" viewBox="0 0 22 22"><path d="M11 0v22M0 11h22" stroke="#6a686b" strokeWidth="2" /></svg>
      </div>
    </div>
  );
}

const rows = [
  ['1', 'ZHAO_Fubang', '198', '0.110875706215'],
  ['2', 'PAN_Xiao', '57', '0.111346516008'],
  ['3', 'ZHOU_Yidi', '396', '0.113465160075'],
  ['4', 'CHU_Xiao', '99', '0.114877589454'],
  ['5', 'SOUDANI_Jawher', '211', '0.114877589454'],
  ['6', 'FENG_Yao', '280', '0.115348399247'],
  ['7', 'FERJANI_Ahmed', '208', '0.116290018832'],
  ['8', 'LI_Yu', '350', '0.116525423729'],
];

const h1 = 'text-[60px] leading-[66px] font-normal [-webkit-text-stroke:2.2px_#333]';
const cell = 'h-[62px] border-2 border-[#ddd] pt-[12px] pb-[8px] text-left font-normal leading-[40px] align-top';

function Page() {
  return (
    <main className="flex-1 overflow-hidden bg-[linear-gradient(90deg,#f0f0f0_0px,#f7f7f7_24px,#fcfcfc_50px,#ffffff_95px)] pl-[104px] font-['Liberation_Sans',Arial,sans-serif] text-[28px] leading-[40px] text-[#333] [-webkit-text-stroke:0.3px]">
      <div className="h-[98px]">
        <div className="ml-[679px] h-[2px] w-[12px] rounded-b-full bg-[#777]" />
      </div>
      <div className="w-[2280px]">
        <h1 className={h1 + ' box-content border-b-2 border-[#eee] pb-[18px] tracking-[1.45px]'}>Description / Starting Kit</h1>
        <p className="mt-[41px] tracking-[0.14px]">Toutes les informations sont disponibles dans le starting kit téléchargeable ci-dessous.</p>
        <h4 className="mt-[19px] text-[36px] leading-[40px] tracking-[0.8px] [-webkit-text-stroke:1.2px_#333]">Starting kit</h4>
        <p className="mt-[19px] tracking-[0.23px] text-[#337ab7]">Starting kit on notebook IPython</p>
        <h1 className={h1 + ' mt-[79px] box-content border-b-2 border-[#eee] pb-[18px] tracking-[1.05px]'}>Nouvelle soumission</h1>
        <div className="mt-[41px] font-bold tracking-[-0.1px]">Selectionner un fichier:</div>
        <div className="mt-[6px] flex h-[40px] items-center">
          <button className="ml-[1px] h-[34px] w-[151px] rounded-[7px] border border-[#d0d0d0] border-b-[#b0b0b0] bg-white pl-[2px] pt-[2px] font-['Inter',sans-serif] text-[22px] leading-[30px] text-black shadow-[0_1px_1px_rgba(0,0,0,0.12)]">Choose File</button>
          <span className="ml-[10px] tracking-[0.1px]">no file selected</span>
        </div>
        <button className="mt-[19px] block h-[68px] w-[182px] rounded-[8px] border-2 border-[#ccc] bg-white pl-[1px] leading-[66px] tracking-[0.25px]">Soumettre</button>
        <h1 className={h1 + ' mt-[40px] tracking-[1.15px]'}>Leader board</h1>
        <table className="mt-[20px] w-[2280px] table-fixed border-collapse">
          <colgroup>
            <col className="w-[236px]" />
            <col className="w-[946px]" />
            <col className="w-[651px]" />
            <col className="w-[445px]" />
          </colgroup>
          <tbody>
            <tr>
              <td className={cell + ' pl-[10px] tracking-[0.2px]'}>Position</td>
              <td className={cell + ' pl-[9px]'}>Nom</td>
              <td className={cell + ' pl-[10px]'}>Nombre de soumission(s)</td>
              <td className={cell + ' pl-[10px]'}>Meilleur Score</td>
            </tr>
            {rows.map((r) => (
              <tr key={r[0]}>
                <td className={cell + ' pl-[10px]'}>{r[0]}</td>
                <td className={cell + ' pl-[9px] tracking-[-0.2px]'}>{r[1]}</td>
                <td className={cell + ' pl-[10px] tracking-[0.24px]'}>{r[2]}</td>
                <td className={cell + ' pl-[10px] tracking-[0.18px]'}>{r[3]}</td>
              </tr>
            ))}
          </tbody>
        </table>
      </div>
    </main>
  );
}

export default function App() {
  return (
    <div className="flex h-[1600px] w-[2560px] flex-col overflow-hidden bg-[#1b1514]">
      <Gradients />
      <MenuBar />
      <div className="flex flex-1">
        <Dock />
        <div className="flex h-[1556px] w-[2489px] flex-col overflow-hidden rounded-tl-[8px] bg-[#dcdcda]">
          <div className="flex h-[6px] shrink-0 items-end">
            <div className="ml-[18px] h-[3px] w-[1270px] rounded-t-[3px] border-b border-[#4a5f80] bg-[#4f74a8]" />
            <div className="h-[1px] flex-1 bg-[#a9a9a9]" />
          </div>
          <div className="flex min-h-0 flex-1 flex-col border-l border-[#9a9a9c]">
            <Toolbar />
            <TabBar />
            <Page />
          </div>
        </div>
      </div>
    </div>
  );
}
